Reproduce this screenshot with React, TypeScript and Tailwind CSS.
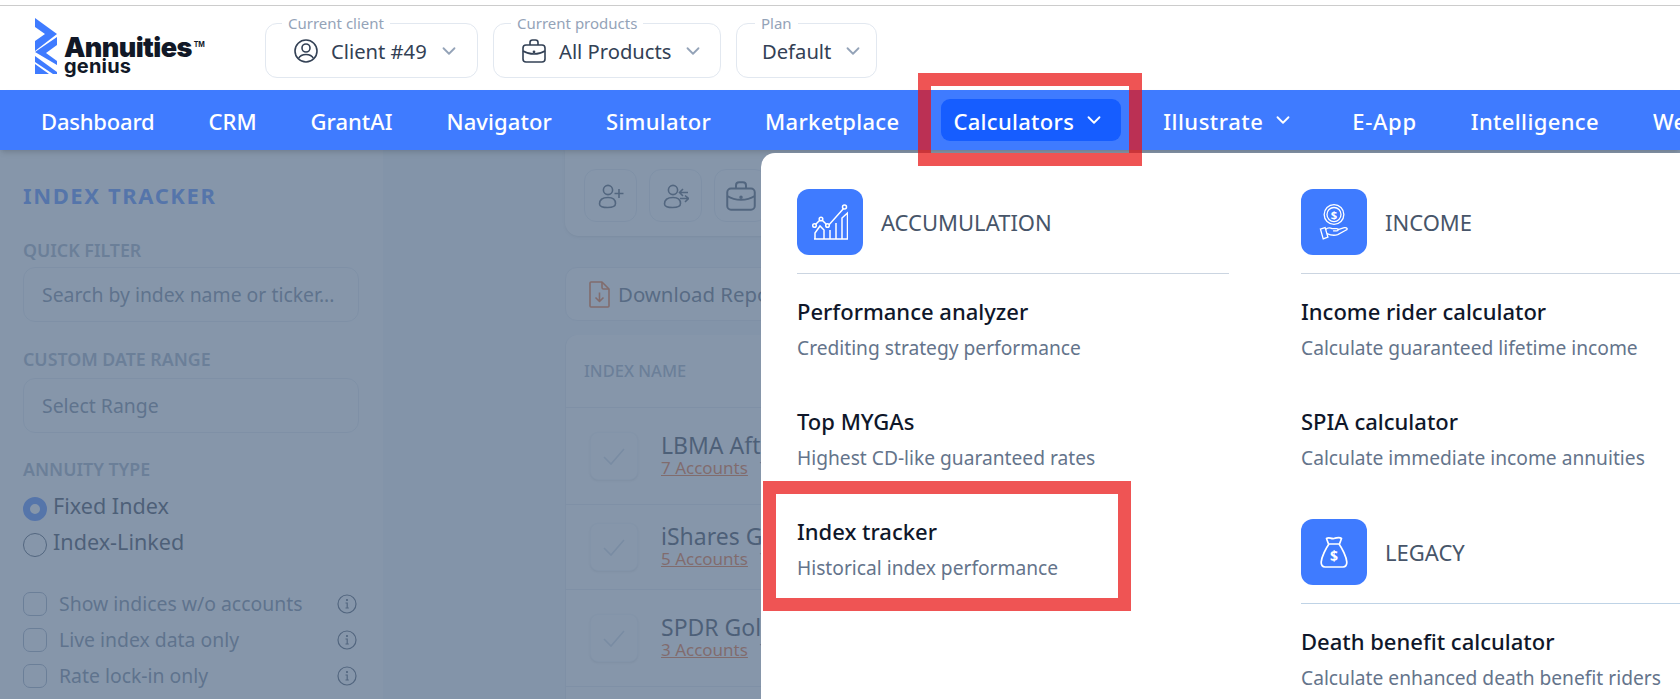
import { ChevronDown } from "lucide-react";

function Logo() {
  return (
    <div className="flex items-start w-[190px] ml-[35px] mt-[12px]">
      <svg width="22" height="56" viewBox="0 0 22 56" className="shrink-0">
        <path d="M0 0 L22 16 L0 33 V23 L10 16 L0 9 Z" fill="#3f7bff" />
        <path d="M22 19 V27 L11 35 L22 43 V47 L0 34 Z" fill="#3f7bff" />
        <path d="M0 38 L22 54 V56 H18 L0 44 Z M0 46 L14 56 H0 Z" fill="#3f7bff" />
      </svg>
      <div className="ml-[7px] mt-[18px] font-['Inter',sans-serif] text-[#111827]">
        <div className="flex items-start leading-[24px]">
          <span className="text-[27px] font-black tracking-[-0.6px]">Annuities</span>
          <span className="text-[7px] font-bold leading-[10px] mt-[4px] ml-[2px]">TM</span>
        </div>
        <div className="text-[20px] font-bold leading-[17px] -mt-[2px] tracking-[0.2px]">genius</div>
      </div>
    </div>
  );
}

function UserCircleIcon() {
  return (
    <svg width="24" height="24" viewBox="0 0 24 24" fill="none" stroke="#334155" strokeWidth="1.6" className="shrink-0">
      <circle cx="12" cy="12" r="11" />
      <circle cx="12" cy="9" r="4" />
      <path d="M4.5 19.5 C6 16.5 8.5 15.5 12 15.5 C15.5 15.5 18 16.5 19.5 19.5" />
    </svg>
  );
}

function BriefcaseIcon({ color = "#334155", size = 24 }: { color?: string; size?: number }) {
  return (
    <svg width={size} height={size} viewBox="0 0 24 24" fill="none" stroke={color} strokeWidth="1.6" strokeLinejoin="round" className="shrink-0">
      <path d="M8 6 V3.5 C8 2 9 1 10.5 1 H13.5 C15 1 16 2 16 3.5 V6" />
      <rect x="1" y="6" width="22" height="17" rx="3" />
      <path d="M1 12 C5 14.5 8 15 12 15 C16 15 19 14.5 23 12" />
      <circle cx="12" cy="13" r="0.6" fill={color} />
    </svg>
  );
}

function Select({ label, text, icon, labelOffset, left, w }: { label: string; text: string; icon?: React.ReactNode; labelOffset: string; left: string; w: string }) {
  return (
    <div className={`relative h-[55px] rounded-[12px] border border-[#e2e8f0] bg-white flex items-center ${left} ${w}`}>
      <span className={`absolute -top-[11px] ${labelOffset} px-[6px] bg-white text-[15px] leading-[20px] text-[#94a3b8]`}>{label}</span>
      {icon}
      <span className={`pt-[1px] text-[20.2px] leading-[28px] text-[#334155] whitespace-nowrap ${icon ? "ml-[13px]" : ""}`}>{text}</span>
      <ChevronDown size={22} strokeWidth={2} color="#94a3b8" className="ml-[11px] shrink-0" />
    </div>
  );
}

function NavItem({ text, chevron, active, track = "tracking-[0.3px]" }: { text: string; chevron?: boolean; active?: boolean; track?: string }) {
  return (
    <div className={`flex items-center h-[42px] pl-3 pr-3 rounded-[9px] shrink-0 ${active ? "bg-[#165dff]" : ""}`}>
      <span className={`pt-[1px] text-[22px] leading-[30px] font-medium text-white ${track}`}>{text}</span>
      {chevron && <ChevronDown size={22} strokeWidth={2} color="white" className="ml-[9px] mr-[4px]" />}
    </div>
  );
}

function Info() {
  return (
    <svg width="20" height="20" viewBox="0 0 20 20" fill="none" stroke="#334155" strokeWidth="1.2" className="shrink-0 ml-auto mr-[2px]">
      <circle cx="10" cy="10" r="9" />
      <path d="M8.5 9 H10.2 V14 M8.5 14 H11.8" />
      <circle cx="10" cy="6" r="0.5" fill="#334155" />
    </svg>
  );
}

function Check({ label, mt }: { label: string; mt: string }) {
  return (
    <div className={`flex items-center h-[24px] ${mt}`}>
      <div className="w-6 h-6 rounded-[7px] border border-[#94a3b8] bg-white shrink-0" />
      <span className="ml-[12px] text-[19.4px] leading-[24px] text-[#64748b]">{label}</span>
      <Info />
    </div>
  );
}

function Sidebar() {
  return (
    <aside className="w-[384px] shrink-0 bg-white border-r border-[#f1f5f9] pl-[23px] pr-[24px] pt-[33px]">
      <div className="text-[22px] font-bold leading-[24px] tracking-[1.6px] text-[#3f7bff]">INDEX TRACKER</div>
      <div className="mt-[33px] text-[17.8px] font-semibold leading-[20px] text-[#94a3b8]">QUICK FILTER</div>
      <div className="mt-[7px] h-[55px] rounded-[12px] border border-[#e2e8f0] flex items-center pl-[18px] text-[19.4px] text-[#64748b]">Search by index name or ticker...</div>
      <div className="mt-[27px] text-[17.8px] font-semibold leading-[20px] text-[#94a3b8]">CUSTOM DATE RANGE</div>
      <div className="mt-[9px] h-[55px] rounded-[12px] border border-[#e2e8f0] flex items-center pl-[18px] text-[19.4px] text-[#64748b]">Select Range</div>
      <div className="mt-[26px] text-[17.8px] font-semibold leading-[20px] text-[#94a3b8]">ANNUITY TYPE</div>
      <div className="mt-[18px] flex items-center h-6">
        <div className="w-6 h-6 rounded-full border-[7px] border-[#3f7bff] bg-white" />
        <span className="ml-[6px] -mt-[5px] text-[21.6px] text-[#1e293b]">Fixed Index</span>
      </div>
      <div className="mt-[12px] flex items-center h-6">
        <div className="w-6 h-6 rounded-full border border-[#334155] bg-white" />
        <span className="ml-[6px] -mt-[5px] text-[21.6px] text-[#1e293b]">Index-Linked</span>
      </div>
      <Check label="Show indices w/o accounts" mt="mt-[35px]" />
      <Check label="Live index data only" mt="mt-[12px]" />
      <Check label="Rate lock-in only" mt="mt-[12px]" />
    </aside>
  );
}

function ActionButton({ children }: { children: React.ReactNode }) {
  return <div className="w-[53px] h-[53px] rounded-[12px] border border-[#e2e8f0] flex items-center justify-center shrink-0">{children}</div>;
}

function UserPlusIcon() {
  return (
    <svg width="26" height="26" viewBox="0 0 26 26" fill="none" stroke="#334155" strokeWidth="1.6">
      <circle cx="10" cy="7" r="4.6" />
      <path d="M1.5 21 C1.5 16.5 5 14.5 10 14.5 C15 14.5 17.5 16.5 17.5 20.5 C17.5 23.5 13 24.5 9.5 24.5 C5 24.5 1.5 23.5 1.5 21 Z" />
      <path d="M21 6 V15 M16.5 10.5 H25.5" />
    </svg>
  );
}

function UserSwapIcon() {
  return (
    <svg width="26" height="26" viewBox="0 0 26 26" fill="none" stroke="#334155" strokeWidth="1.6">
      <circle cx="10" cy="7" r="4.6" />
      <path d="M1.5 21 C1.5 16.5 5 14.5 10 14.5 C15 14.5 17.5 16.5 17.5 20.5 C17.5 23.5 13 24.5 9.5 24.5 C5 24.5 1.5 23.5 1.5 21 Z" />
      <path d="M25 9.5 H17 M20 6 L16.5 9.5 L20 13 M17 15.5 H25 M22 12.5 L25.5 15.5 L22 19" />
    </svg>
  );
}

function Row({ name, acc, h }: { name: string; acc: string; h: string }) {
  return (
    <div className={`flex items-center pl-[24px] border-t border-[#e2e8f0] ${h}`}>
      <div className="w-12 h-12 rounded-[8px] border border-[#f1f5f9] bg-white shadow-sm flex items-center justify-center shrink-0">
        <svg width="24" height="24" viewBox="0 0 24 24" fill="none" stroke="#cbd5e1" strokeWidth="1.6">
          <path d="M2 13 L9 20 L22 5" />
        </svg>
      </div>
      <div className="ml-[23px] pb-[3px] whitespace-nowrap">
        <div className="text-[23px] leading-[27px] text-[#1e293b]">{name}</div>
        <div className="text-[17px] leading-[18px] flex">
          <span className="text-[#ea580c] underline">{acc}</span>
          <span className="ml-[12px] text-[#64748b]">Ticker</span>
        </div>
      </div>
    </div>
  );
}

function Main() {
  return (
    <main className="flex-1 bg-[#f1f5f9] pl-[181px] min-w-0">
      <div className="bg-white rounded-bl-[14px] h-[86px] pt-[19px] pl-[19px] flex gap-[12px] shadow-sm">
        <ActionButton><UserPlusIcon /></ActionButton>
        <ActionButton><UserSwapIcon /></ActionButton>
        <ActionButton><BriefcaseIcon size={30} /></ActionButton>
      </div>
      <div className="mt-[31px] h-[54px] bg-white border border-[#e2e8f0] rounded-l-[12px] flex items-center pl-[23px]">
        <svg width="21" height="27" viewBox="0 0 21 27" fill="none" stroke="#ea580c" strokeWidth="1.6" strokeLinejoin="round" className="shrink-0">
          <path d="M1 2 C1 1.4 1.4 1 2 1 H13 L20 8 V25 C20 25.6 19.6 26 19 26 H2 C1.4 26 1 25.6 1 25 Z" />
          <path d="M13 1 V6.5 C13 7.5 13.5 8 14.5 8 H20" />
          <path d="M10.5 11.5 V20 M6.5 16.5 L10.5 20.5 L14.5 16.5" />
        </svg>
        <span className="ml-[8px] text-[20.4px] text-[#475569] whitespace-nowrap">Download Report</span>
      </div>
      <div className="mt-[14px] bg-white rounded-tl-[12px] border-l border-[#e2e8f0]">
        <div className="h-[72px] flex items-center pl-[18px] text-[16.5px] font-medium text-[#94a3b8]">INDEX NAME</div>
        <Row name="LBMA Afternoon Gold" acc="7 Accounts" h="h-[97px]" />
        <Row name="iShares Gold Trust" acc="5 Accounts" h="h-[85px]" />
        <Row name="SPDR Gold Shares" acc="3 Accounts" h="h-[97px]" />
        <div className="border-t border-[#e2e8f0] h-[20px]" />
      </div>
    </main>
  );
}

function Tile({ children }: { children: React.ReactNode }) {
  return <div className="w-[66px] h-[66px] rounded-[12px] bg-[#3f7bff] flex items-center justify-center shrink-0">{children}</div>;
}

function Section({ icon, title, children, borderColor = "border-[#cbd5e1]" }: { icon: React.ReactNode; title: string; children: React.ReactNode; borderColor?: string }) {
  return (
    <div>
      <div className={`flex items-center h-[85px] pb-[18px] border-b ${borderColor}`}>
        <Tile>{icon}</Tile>
        <span className="ml-[18px] pt-[1px] text-[22px] text-[#475569]">{title}</span>
      </div>
      {children}
    </div>
  );
}

function Item({ title, desc }: { title: string; desc: string }) {
  return (
    <div className="h-[110px] pt-[19px] whitespace-nowrap">
      <div className="text-[22px] font-medium leading-[36px] text-[#0f172a]">{title}</div>
      <div className="text-[19.2px] leading-[36px] mt-[1px] text-[#64748b]">{desc}</div>
    </div>
  );
}

function ChartIcon() {
  return (
    <svg width="36" height="36" viewBox="0 0 36 36" fill="none" stroke="white" strokeWidth="1.5">
      <path d="M2 35 H35.5 V9 L30 14 V35 M24 35 V19 M18 35 V26 M12 35 V26 L8 22 L3 29 V35" />
      <path d="M3 21 L9 15 L16 22 L32 4" />
      <circle cx="2.5" cy="21.5" r="1.8" fill="#3f7bff" />
      <circle cx="9" cy="15" r="1.8" fill="#3f7bff" />
      <circle cx="15.5" cy="21.5" r="1.8" fill="#3f7bff" />
      <circle cx="32.5" cy="3" r="2" fill="#3f7bff" />
    </svg>
  );
}

function IncomeIcon() {
  return (
    <svg width="30" height="36" viewBox="0 0 32 38" fill="none" stroke="white" strokeWidth="1.4">
      <circle cx="16" cy="11" r="10.5" />
      <circle cx="16" cy="11" r="7.5" />
      <text x="16" y="15.5" textAnchor="middle" fontSize="12" fontWeight="700" fill="white" stroke="none" fontFamily="Noto Sans">$</text>
      <path d="M7 27 C9 25 12 25 14 26 H19 C21 26 21 28.5 19 28.5 H15 M19.5 27.5 L27 25 C30 24.5 31 26.5 29 27.5 L20 32.5 C17 33.5 12 33 8.5 31.5" />
      <path d="M1.5 26.5 L6.5 25 L9.5 35 L4.5 37 Z" />
    </svg>
  );
}

function BagIcon() {
  return (
    <svg width="28" height="32" viewBox="0 0 28 32" fill="none" stroke="white" strokeWidth="1.7" strokeLinejoin="round">
      <path d="M8.5 8 L6.5 2.5 C9 0.5 10.5 3 14 2.5 C17.5 2 19 0.5 21.5 2.5 L19.5 8 Z" />
      <path d="M9 8 C6 12 1.5 21 1.2 26 C1 29 2.5 31 5 31 H23 C25.5 31 27 29 26.8 26 C26.5 21 22 12 19 8" />
      <text x="14" y="25" textAnchor="middle" fontSize="14" fontWeight="700" fill="white" stroke="none" fontFamily="Noto Sans">$</text>
    </svg>
  );
}

function Dropdown() {
  return (
    <div className="absolute left-[761px] top-[153px] w-[1000px] h-[560px] bg-white rounded-tl-[14px] z-20 pl-[36px] pt-[36px] flex gap-[72px]">
      <div className="w-[432px] shrink-0">
        <Section icon={<ChartIcon />} title="ACCUMULATION">
          <Item title="Performance analyzer" desc="Crediting strategy performance" />
          <Item title="Top MYGAs" desc="Highest CD-like guaranteed rates" />
          <Item title="Index tracker" desc="Historical index performance" />
        </Section>
      </div>
      <div className="w-[432px] shrink-0">
        <Section icon={<IncomeIcon />} title="INCOME">
          <Item title="Income rider calculator" desc="Calculate guaranteed lifetime income" />
          <Item title="SPIA calculator" desc="Calculate immediate income annuities" />
        </Section>
        <div className="mt-[25px]">
          <Section icon={<BagIcon />} title="LEGACY" borderColor="border-[#bfd3e6]">
            <Item title="Death benefit calculator" desc="Calculate enhanced death benefit riders" />
          </Section>
        </div>
      </div>
    </div>
  );
}

export default function App() {
  return (
    <div className="relative h-[699px] overflow-hidden bg-white font-['Noto_Sans',sans-serif]">
      <div className="h-[6px] border-b border-[#cccccc]" />
      <header className="h-[84px] flex items-start">
        <Logo />
        <div className="flex gap-[15px] mt-[17px] ml-[40px]">
          <Select label="Current client" text="Client #49" icon={<div className="ml-[28px]"><UserCircleIcon /></div>} labelOffset="left-[16px]" left="" w="w-[213px]" />
          <Select label="Current products" text="All Products" icon={<div className="ml-[28px]"><BriefcaseIcon /></div>} labelOffset="left-[17px]" left="" w="w-[228px]" />
          <Select label="Plan" text="Default" labelOffset="left-[18px]" left="pl-[25px]" w="w-[141px]" />
        </div>
      </header>
      <nav className="relative z-10 h-[60px] bg-[#3f7bff] flex items-center pl-[29px] gap-[30px] overflow-hidden shadow-md">
        <NavItem text="Dashboard" track="tracking-[-0.2px]" />
        <NavItem text="CRM" track="" />
        <NavItem text="GrantAI" track="" />
        <NavItem text="Navigator" track="tracking-[0.1px]" />
        <NavItem text="Simulator" />
        <NavItem text="Marketplace" />
        <NavItem text="Calculators" chevron active />
        <NavItem text="Illustrate" chevron track="tracking-[0.5px]" />
        <NavItem text="E-App" track="tracking-[0.7px]" />
        <NavItem text="Intelligence" track="tracking-[0.35px]" />
        <NavItem text="Wealth" />
      </nav>
      <div className="flex h-[549px]">
        <Sidebar />
        <Main />
      </div>
      <div className="absolute inset-x-0 top-[150px] bottom-0 bg-[rgba(93,115,141,0.75)]" />
      <Dropdown />
      <div className="absolute left-[918px] top-[73px] w-[224px] h-[93px] border-[13px] border-[rgba(233,20,20,0.73)] z-30" />
      <div className="absolute left-[763px] top-[481px] w-[368px] h-[130px] border-[13px] border-[rgba(233,20,20,0.73)] z-30" />
    </div>
  );
}
